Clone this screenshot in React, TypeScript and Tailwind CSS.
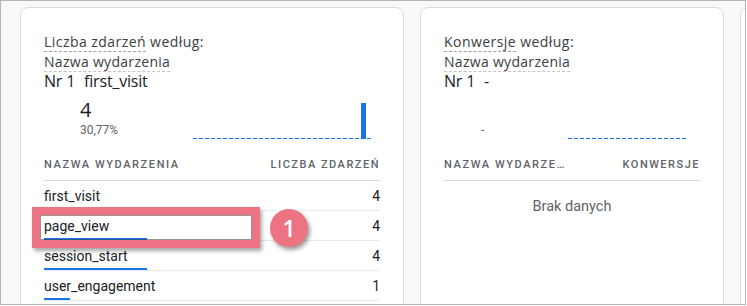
import React from "react";

const rows = [
  { name: "first_visit", value: 4 },
  { name: "page_view", value: 4 },
  { name: "session_start", value: 4 },
  { name: "user_engagement", value: 1 },
];

const titleFont = { fontFamily: '"Open Sans", Roboto, sans-serif' };

function Title({ metric, dim, top }: { metric: string; dim: string; top: string }) {
  return (
    <div style={titleFont}>
      <div className="text-[14px] leading-5 text-[#3c4043] tracking-[0.45px]">
        <span className="border-b border-dashed border-[#9aa0a6]">{metric}</span> według:
      </div>
      <div className="text-[14px] leading-5 text-[#3c4043] tracking-[0.3px]">
        <span className="border-b border-dashed border-[#c4c7c5]">{dim}</span>
      </div>
      <div className="flex gap-[9px] text-[16px] leading-[18px] font-medium text-[#202124] tracking-[-0.2px]">
        <span>Nr 1</span>
        <span>{top}</span>
      </div>
    </div>
  );
}

function Sparkline({ width, bar }: { width: number; bar?: number }) {
  return (
    <svg width={width} height={48} className="block">
      <line x1={0} y1={40.5} x2={width} y2={40.5} stroke="#1a73e8" strokeWidth={1} strokeDasharray="4 2" />
      {bar !== undefined && <rect x={bar} y={5} width={5} height={36} fill="#1a73e8" />}
    </svg>
  );
}

export default function App() {
  return (
    <div className="w-[746px] h-[305px] overflow-hidden border border-[#b5b5b5] bg-[#f8f9fa] flex gap-4 pl-[19px] pt-[6px]" style={{ fontFamily: "Roboto, sans-serif" }}>
      {/* karta 1 */}
      <div className="relative w-[384px] h-[330px] shrink-0 rounded-lg border border-[#dadce0] bg-white px-[23px] pt-6">
        <Title metric="Liczba zdarzeń" dim="Nazwa wydarzenia" top="first_visit" />

        <div className="flex mt-[8px]">
          <div className="w-[149px] pl-[36px]">
            <div className="text-[20px] leading-6 text-[#202124]" style={titleFont}>4</div>
            <div className="text-[12px] leading-4 text-[#5f6368]">30,77%</div>
          </div>
          <Sparkline width={179} bar={168} />
        </div>

        <div className="flex justify-between items-center h-[35px] pt-[3px] border-b border-[#dadce0] text-[11px] leading-4 font-medium tracking-[1.6px] text-[#5f6368]">
          <span>NAZWA WYDARZENIA</span>
          <span className="tracking-[1.5px]">LICZBA ZDARZEŃ</span>
        </div>

        {rows.map((r) => (
          <div key={r.name} className="h-[30px] border-b border-[#e8eaed] pt-[5px]">
            <div className="flex justify-between text-[14px] leading-5 text-[#202124]">
              <span>{r.name}</span>
              <span>{r.value}</span>
            </div>
            <div className="mt-[2px] h-[2px] bg-[#1a73e8]" style={{ width: (r.value / 4) * 103 }} />
          </div>
        ))}

        {/* oznaczenie */}
        <div className="absolute left-[11px] top-[199px] w-[228px] h-[41px] border-[8px] border-[#ee7384] shadow-[2px_3px_4px_rgba(0,0,0,0.35),inset_0_0_0_1px_rgba(60,60,60,0.55)]" />
        <div className="absolute left-[249px] top-[201px] w-[38px] h-[38px] rounded-full bg-[#ec7382] shadow-[2px_3px_4px_rgba(0,0,0,0.4)] flex items-center justify-center text-white text-[23px] font-semibold" style={titleFont}>
          1
        </div>
      </div>

      {/* karta 2 */}
      <div className="w-[304px] h-[330px] shrink-0 rounded-lg border border-[#dadce0] bg-white px-[23px] pt-6">
        <Title metric="Konwersje" dim="Nazwa wydarzenia" top="-" />

        <div className="flex mt-[8px]">
          <div className="w-[124px] pl-[37px]">
            <div className="h-6" />
            <div className="text-[12px] leading-4 text-[#5f6368]">-</div>
          </div>
          <Sparkline width={119} />
        </div>

        <div className="flex justify-between items-center h-[35px] pt-[3px] border-b border-[#dadce0] text-[11px] leading-4 font-medium tracking-[1.6px] text-[#5f6368]">
          <span>NAZWA WYDARZE…</span>
          <span className="tracking-[1.5px]">KONWERSJE</span>
        </div>

        <div className="mt-4 text-center text-[14.5px] leading-5 text-[#5f6368]">Brak danych</div>
      </div>

      {/* karta 3 */}
      <div className="w-[300px] h-[330px] shrink-0 rounded-lg border border-[#dadce0] bg-white" />
    </div>
  );
}
